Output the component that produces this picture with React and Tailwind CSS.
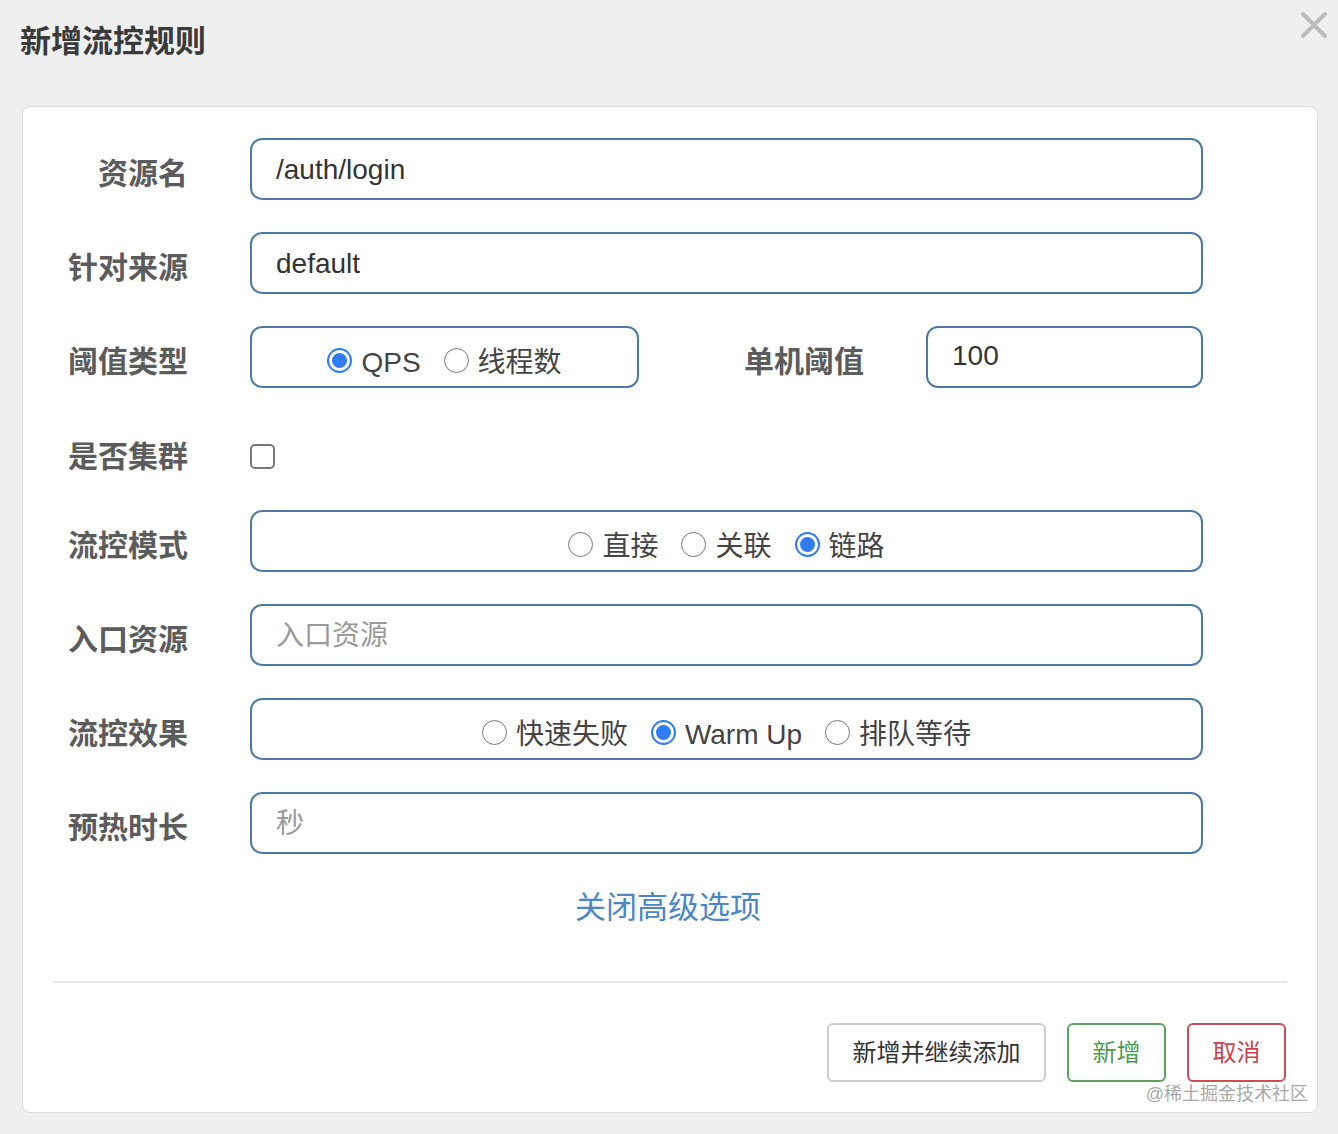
import React, { useState } from 'react';

const font = { fontFamily: '"Liberation Sans", "Noto Sans CJK SC", sans-serif' };

function Radio({ checked, label, onClick }) {
  return (
    <label className="flex items-center gap-[9px] cursor-pointer" onClick={onClick}>
      {checked ? (
        <span className="w-[25px] h-[25px] rounded-full border-2 border-[#2f7cf6] flex items-center justify-center">
          <span className="w-[15px] h-[15px] rounded-full bg-[#2f7cf6]" />
        </span>
      ) : (
        <span className="w-[25px] h-[25px] rounded-full border-[1.5px] border-[#777]" />
      )}
      <span className="text-[28px] text-[#444] leading-none translate-y-[3px]">{label}</span>
    </label>
  );
}

function RadioGroup({ options, value, onChange, className }) {
  return (
    <div
      className={
        'h-[62px] rounded-[12px] border-2 border-[#4d79a9] flex items-center justify-center gap-[23px] pt-[6px] ' +
        (className || '')
      }
    >
      {options.map((o) => (
        <Radio key={o} label={o} checked={value === o} onClick={() => onChange(o)} />
      ))}
    </div>
  );
}

function TextInput({ value, placeholder, className }) {
  return (
    <input
      defaultValue={value}
      placeholder={placeholder}
      className={
        'h-[62px] rounded-[12px] border-2 border-[#4d79a9] px-[24px] pt-[2px] text-[28px] text-[#333] placeholder:text-[#999] outline-none bg-white ' +
        (className || '')
      }
      style={font}
    />
  );
}

function Label({ children, shift = 'translate-y-[4px]' }) {
  return (
    <div className={'w-[165px] shrink-0 text-right text-[30px] font-bold text-[#5c5c5c] ' + shift}>
      {children}
    </div>
  );
}

function Row({ label, children, h = 'h-[62px]', shift }) {
  return (
    <div className={'flex items-center ' + h}>
      <Label shift={shift}>{label}</Label>
      <div className="ml-[62px] flex-1 flex items-center">{children}</div>
    </div>
  );
}

export default function App() {
  const [grade, setGrade] = useState('QPS');
  const [strategy, setStrategy] = useState('链路');
  const [behavior, setBehavior] = useState('Warm Up');

  return (
    <div className="w-[1338px] h-[1134px] bg-[#efefef] relative overflow-hidden" style={font}>
      {/* header */}
      <div className="h-[106px] flex items-start justify-between">
        <h1 className="ml-[20px] mt-[22px] text-[31px] font-bold text-[#3a3a3a] leading-[40px]">新增流控规则</h1>
        <svg className="mt-[11px] mr-[10px]" width="28" height="28" viewBox="0 0 28 28">
          <path d="M3 3 L25 25 M25 3 L3 25" stroke="#bcbcbc" strokeWidth="4" strokeLinecap="round" />
        </svg>
      </div>

      {/* card */}
      <div className="ml-[22px] mr-[20px] h-[1007px] bg-white border border-[#dcdcdc] rounded-[8px] relative">
        <div className="pt-[31px] pr-[114px] flex flex-col gap-[32px]">
          <Row label="资源名">
            <TextInput value="/auth/login" className="w-full" />
          </Row>
          <Row label="针对来源">
            <TextInput value="default" className="w-full" />
          </Row>
          <Row label="阈值类型">
            <RadioGroup
              options={['QPS', '线程数']}
              value={grade}
              onChange={setGrade}
              className="w-[389px]"
            />
            <div className="flex-1 text-right text-[30px] font-bold text-[#5c5c5c] translate-y-[4px]">单机阈值</div>
            <TextInput value="100" className="ml-[62px] w-[277px] pb-[4px]" />
          </Row>
          <Row label="是否集群" h="h-[58px]" shift="translate-y-[7px]">
            <span className="w-[25px] h-[25px] rounded-[5px] border-2 border-[#777] translate-y-[7px]" />
          </Row>
          <Row label="流控模式">
            <RadioGroup
              options={['直接', '关联', '链路']}
              value={strategy}
              onChange={setStrategy}
              className="w-full"
            />
          </Row>
          <Row label="入口资源">
            <TextInput placeholder="入口资源" className="w-full" />
          </Row>
          <Row label="流控效果">
            <RadioGroup
              options={['快速失败', 'Warm Up', '排队等待']}
              value={behavior}
              onChange={setBehavior}
              className="w-full"
            />
          </Row>
          <Row label="预热时长">
            <TextInput placeholder="秒" className="w-full" />
          </Row>
        </div>

        <div className="flex justify-center mt-[32px]">
          <a className="text-[31px] text-[#4a86c8] cursor-pointer leading-[44px] ml-[-4px]">关闭高级选项</a>
        </div>

        <div className="mx-[30px] mt-[51px] border-t-2 border-[#e6e6e6]" />

        <div className="flex justify-end gap-[21px] mr-[31px] mt-[40px]">
          <button className="w-[219px] h-[59px] rounded-[6px] border-2 border-[#cccccc] bg-white text-[24px] text-[#333]">
            新增并继续添加
          </button>
          <button className="w-[99px] h-[59px] rounded-[6px] border-2 border-[#5ea15e] bg-white text-[24px] text-[#4f9a4f]">
            新增
          </button>
          <button className="w-[99px] h-[59px] rounded-[6px] border-2 border-[#c9505a] bg-white text-[24px] text-[#c9434e]">
            取消
          </button>
        </div>

        <div className="absolute right-[9px] top-[978px] text-[18px] text-[#a8a8a8] leading-none">@稀土掘金技术社区</div>
      </div>
    </div>
  );
}
